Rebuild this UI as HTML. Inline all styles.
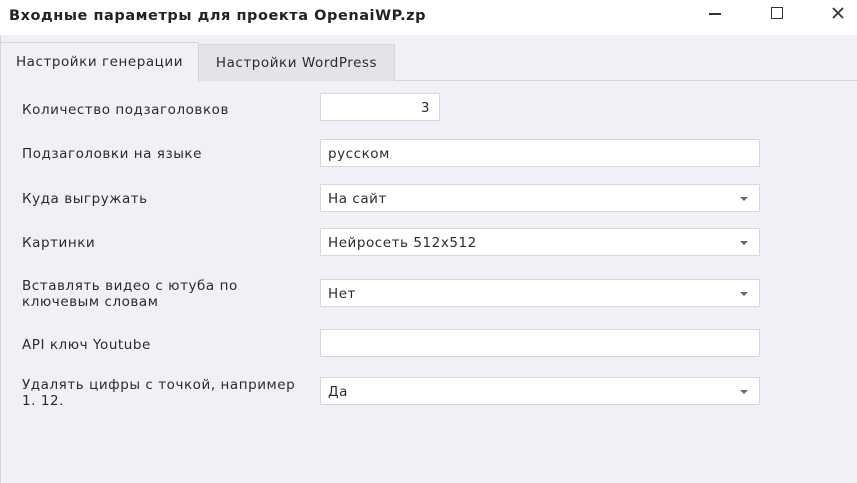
<!DOCTYPE html>
<html><head><meta charset="utf-8"><style>
body{margin:0;width:857px;height:483px;background:#f0f1f6;font-family:"DejaVu Sans",sans-serif;font-size:13.5px;letter-spacing:0.55px;color:#2b2b2b;position:relative;overflow:hidden}
.title{position:absolute;left:0;top:0;width:857px;height:35px;background:#fff}
.title b{position:absolute;left:9px;top:8px;font-size:14.5px;letter-spacing:0.55px;color:#222}
.a{position:absolute}
.tab{position:absolute;border:1px solid #d4d6dc;border-bottom:none;text-align:center}
.lbl{position:absolute;left:22px;line-height:16px}
.in{position:absolute;left:320px;width:438px;height:26px;background:#fff;border:1px solid #d6d8de;box-sizing:content-box}
.in span{position:absolute;left:7px;top:6px}
.dd:after{content:"";position:absolute;right:11px;top:12px;border-left:4px solid transparent;border-right:4px solid transparent;border-top:4px solid #666}
</style></head><body>
<div class="title"><b>Входные параметры для проекта OpenaiWP.zp</b>
<div class="a" style="left:709px;top:13px;width:12px;height:1.5px;background:#333"></div>
<div class="a" style="left:771px;top:7px;width:10px;height:10px;border:1.5px solid #333"></div>
<svg class="a" style="left:832px;top:7px" width="12" height="12"><path d="M1 1L11 11M11 1L1 11" stroke="#333" stroke-width="1.8"/></svg>
</div>
<div class="a" style="left:0;top:35px;width:1px;height:448px;background:#d4d6dc"></div>
<div class="a" style="left:0;top:80px;width:857px;height:1px;background:#d4d6dc"></div>
<div class="tab" style="left:0;top:42px;width:197px;height:39px;background:#f0f1f6;line-height:39px;z-index:2">Настройки генерации</div>
<div class="tab" style="left:198px;top:44px;width:195px;height:36px;background:#e3e4e9;line-height:36px">Настройки WordPress</div>

<div class="lbl" style="top:102px">Количество подзаголовков</div>
<div class="in" style="top:93px;width:118px"><span style="left:auto;right:9px">3</span></div>

<div class="lbl" style="top:146px">Подзаголовки на языке</div>
<div class="in" style="top:139px"><span>русском</span></div>

<div class="lbl" style="top:191px">Куда выгружать</div>
<div class="in dd" style="top:184px"><span>На сайт</span></div>

<div class="lbl" style="top:235px">Картинки</div>
<div class="in dd" style="top:228px"><span>Нейросеть 512x512</span></div>

<div class="lbl" style="top:278px">Вставлять видео с ютуба по<br>ключевым словам</div>
<div class="in dd" style="top:279px"><span>Нет</span></div>

<div class="lbl" style="top:337px">API ключ Youtube</div>
<div class="in" style="top:329px"></div>

<div class="lbl" style="top:377px">Удалять цифры с точкой, например<br>1. 12.</div>
<div class="in dd" style="top:377px"><span>Да</span></div>
</body></html>
